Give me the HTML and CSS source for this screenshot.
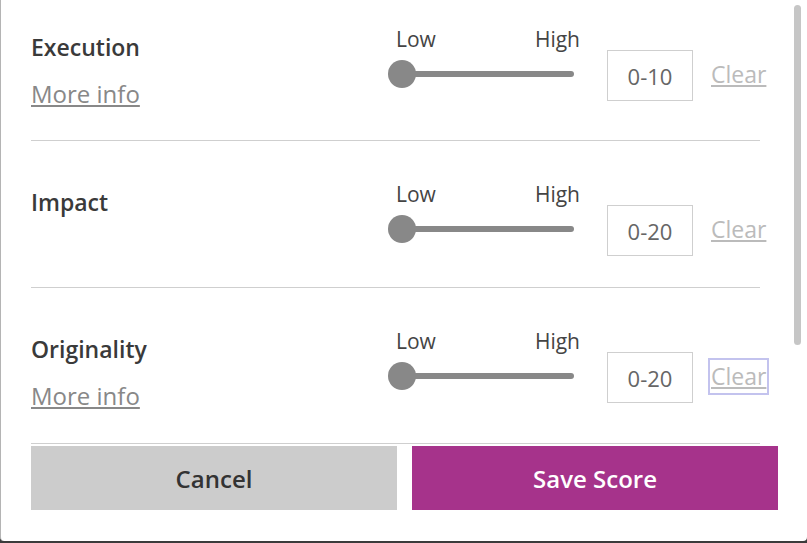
FILE: index.html
```html
<!DOCTYPE html>
<html>
<head>
<meta charset="utf-8">
<link rel="stylesheet" href="styles.css">
</head>
<body>
<div class="modal">
  <div class="content">
    <div class="row row-first">
      <div class="info">
        <div class="label">Execution</div>
        <a class="more" href="#">More info</a>
      </div>
      <div class="slider">
        <div class="ends"><span>Low</span><span>High</span></div>
        <div class="track"><span class="thumb"></span></div>
      </div>
      <div class="score">0-10</div>
      <a class="clear" href="#">Clear</a>
    </div>
    <div class="row row-short">
      <div class="info">
        <div class="label">Impact</div>
      </div>
      <div class="slider">
        <div class="ends"><span>Low</span><span>High</span></div>
        <div class="track"><span class="thumb"></span></div>
      </div>
      <div class="score">0-20</div>
      <a class="clear" href="#">Clear</a>
    </div>
    <div class="row row-last">
      <div class="info">
        <div class="label">Originality</div>
        <a class="more" href="#">More info</a>
      </div>
      <div class="slider">
        <div class="ends"><span>Low</span><span>High</span></div>
        <div class="track"><span class="thumb"></span></div>
      </div>
      <div class="score">0-20</div>
      <a class="clear focused" href="#">Clear</a>
    </div>
  </div>
  <div class="actions">
    <button class="btn btn-cancel">Cancel</button>
    <button class="btn btn-save">Save Score</button>
  </div>
  <div class="scrollbar"></div>
</div>
</body>
</html>
```

FILE: styles.css
```css
html, body {
  margin: 0;
  padding: 0;
}
body {
  background: #3b3b3b;
  width: 807px;
  height: 543px;
  overflow: hidden;
  font-family: "Open Sans", "Noto Sans", sans-serif;
}
.modal {
  position: relative;
  width: 806px;
  height: 541px;
  background: #fff;
  border-left: 1px solid #b4b4b4;
  border-radius: 0 0 4px 4px;
  overflow: hidden;
}
.content {
  margin: -14px 0 0 30px;
  width: 729px;
}
.row {
  box-sizing: border-box;
  display: grid;
  grid-template-columns: 357px 193px 112px auto;
  align-items: start;
  border-bottom: 1px solid #cfcfcf;
}
.row-first {
  height: 155px;
}
.row-short {
  height: 147px;
}
.row-last {
  height: 156px;
}
.info {
  display: flex;
  flex-direction: column;
  align-items: flex-start;
  padding-top: 46px;
}
.label {
  font-size: 23px;
  font-weight: 600;
  color: #3a3a3a;
  line-height: 30px;
}
.more {
  margin-top: 17px;
  font-size: 24px;
  line-height: 30px;
  color: #888;
  text-decoration: underline;
}
.slider {
  padding-top: 39px;
}
.ends {
  display: flex;
  justify-content: space-between;
  font-size: 21px;
  line-height: 28px;
  color: #444;
  padding: 0 1px 0 8px;
}
.track {
  position: relative;
  margin: 18px 7px 0 14px;
  height: 6px;
  border-radius: 3px;
  background: #888;
}
.thumb {
  position: absolute;
  left: -14px;
  top: -11px;
  width: 28px;
  height: 28px;
  border-radius: 50%;
  background: #888;
}
.score {
  justify-self: end;
  margin-top: 64px;
  width: 84px;
  height: 49px;
  border: 1px solid #cfcfcf;
  display: flex;
  align-items: center;
  justify-content: center;
  font-size: 22px;
  color: #666;
}
.clear {
  justify-self: start;
  margin: 70px 0 0 15px;
  font-size: 23px;
  line-height: 33px;
  color: #bbb;
  text-decoration: underline;
  padding: 0 1px;
  border: 2px solid transparent;
}
.clear.focused {
  border-color: #c3c3ee;
}
.actions {
  display: flex;
  gap: 15px;
  margin: 2px 0 0 30px;
  width: 747px;
}
.btn {
  flex: 1;
  height: 64px;
  border: none;
  font-family: "Open Sans", "Noto Sans", sans-serif;
  font-size: 24px;
  font-weight: 600;
}
.btn-cancel {
  background: #cccccc;
  color: #333;
}
.btn-save {
  background: #a6338b;
  color: #fff;
}
.scrollbar {
  position: absolute;
  top: 5px;
  left: 793px;
  width: 7px;
  height: 340px;
  border-radius: 4px;
  background: #c6c6c6;
}
```
